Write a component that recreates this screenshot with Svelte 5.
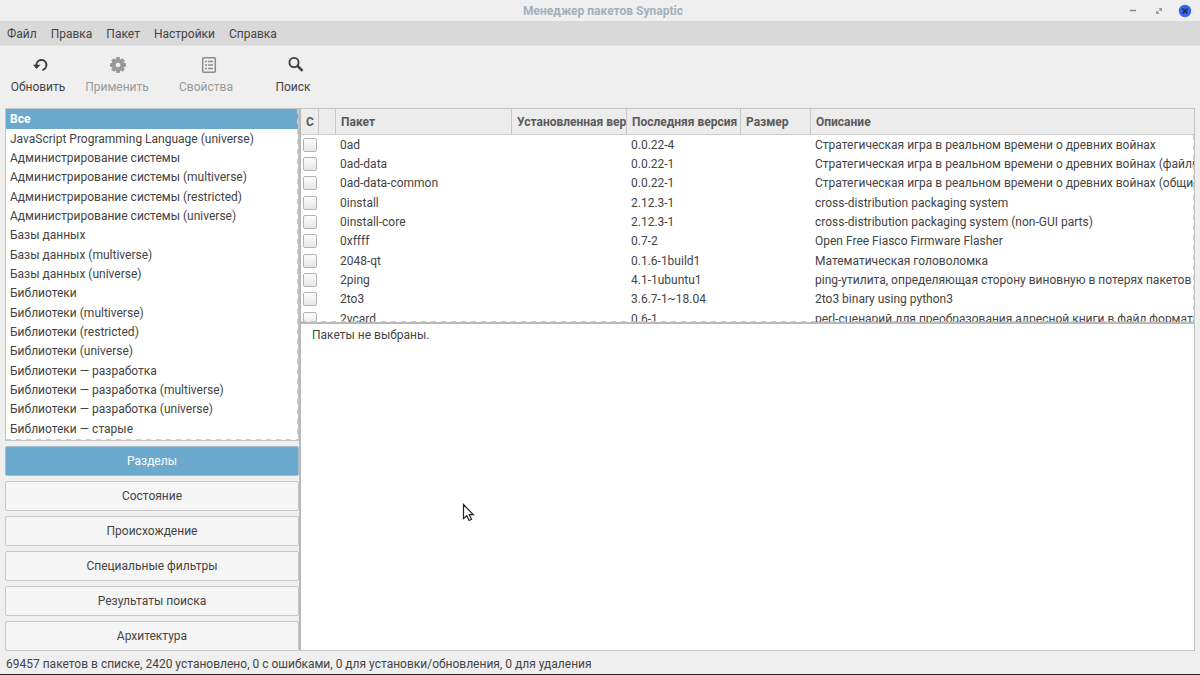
<script>
  const menu = ["Файл", "Правка", "Пакет", "Настройки", "Справка"];

  const sections = [
    "Все",
    "JavaScript Programming Language (universe)",
    "Администрирование системы",
    "Администрирование системы (multiverse)",
    "Администрирование системы (restricted)",
    "Администрирование системы (universe)",
    "Базы данных",
    "Базы данных (multiverse)",
    "Базы данных (universe)",
    "Библиотеки",
    "Библиотеки (multiverse)",
    "Библиотеки (restricted)",
    "Библиотеки (universe)",
    "Библиотеки — разработка",
    "Библиотеки — разработка (multiverse)",
    "Библиотеки — разработка (universe)",
    "Библиотеки — старые",
  ];

  const views = [
    "Разделы",
    "Состояние",
    "Происхождение",
    "Специальные фильтры",
    "Результаты поиска",
    "Архитектура",
  ];

  const packages = [
    { name: "0ad", latest: "0.0.22-4", about: "Стратегическая игра в реальном времени о древних войнах" },
    { name: "0ad-data", latest: "0.0.22-1", about: "Стратегическая игра в реальном времени о древних войнах (файлы данных)" },
    { name: "0ad-data-common", latest: "0.0.22-1", about: "Стратегическая игра в реальном времени о древних войнах (общие файлы)" },
    { name: "0install", latest: "2.12.3-1", about: "cross-distribution packaging system" },
    { name: "0install-core", latest: "2.12.3-1", about: "cross-distribution packaging system (non-GUI parts)" },
    { name: "0xffff", latest: "0.7-2", about: "Open Free Fiasco Firmware Flasher" },
    { name: "2048-qt", latest: "0.1.6-1build1", about: "Математическая головоломка" },
    { name: "2ping", latest: "4.1-1ubuntu1", about: "ping-утилита, определяющая сторону виновную в потерях пакетов" },
    { name: "2to3", latest: "3.6.7-1~18.04", about: "2to3 binary using python3" },
    { name: "2vcard", latest: "0.6-1", about: "perl-сценарий для преобразования адресной книги в файл формата VCARD" },
  ];

  let section = "Все";
  let view = "Разделы";
</script>

<style>
  :global(body) {
    margin: 0;
    background: #efefef;
  }
  .window {
    display: flex;
    flex-direction: column;
    box-sizing: border-box;
    height: 100vh;
    border-bottom: 1px solid #202020;
    background: #efefef;
    color: #444;
    font-family: Roboto, "Noto Sans", sans-serif;
    font-size: 12px;
    line-height: 18px;
    cursor: default;
  }
  button {
    font: inherit;
    color: inherit;
    margin: 0;
    padding: 0;
    border: none;
    background: none;
  }
  svg {
    display: block;
  }
  .titlebar {
    display: grid;
    grid-template-columns: 1fr auto 1fr;
    align-items: center;
    height: 21px;
    padding: 0 8px 0 14px;
  }
  h1 {
    grid-column: 2;
    margin: 0;
    font-size: 12px;
    line-height: 22px;
    color: #a3afbb;
  }
  .controls {
    display: flex;
    justify-content: flex-end;
    gap: 12px;
  }
  .menubar {
    display: flex;
    gap: 14px;
    height: 24px;
    padding: 0 7px;
    background: #d9d9d9;
    border-bottom: 1px solid #e2e2e2;
  }
  .menubar button {
    padding-top: 1px;
  }
  .toolbar {
    display: flex;
    align-items: flex-start;
    height: 54px;
    padding: 8px 0 0 4px;
  }
  .toolbar button {
    display: flex;
    flex-direction: column;
    align-items: center;
    gap: 2px;
    width: 68px;
  }
  .toolbar .apply {
    width: 90px;
  }
  .toolbar .props {
    width: 88px;
  }
  .toolbar .search {
    width: 86px;
  }
  .toolbar button:disabled {
    color: #999;
  }
  .main {
    display: flex;
    flex: 1;
    min-height: 0;
    padding: 0 5px;
  }
  .sidebar {
    display: flex;
    flex-direction: column;
    flex: none;
    gap: 5px;
    width: 294px;
  }
  .sections {
    position: relative;
    flex: 1;
    min-height: 0;
    overflow: hidden;
    margin: 0;
    padding: 0;
    list-style: none;
    background: #fff;
    border: 1px solid #c4c4c4;
  }
  .sections::after,
  .packages::after {
    content: "";
    position: absolute;
    inset: 0;
    background:
      repeating-linear-gradient(#ccc 0 5px, transparent 5px 10px) right / 1px 100% no-repeat,
      repeating-linear-gradient(90deg, #ccc 0 5px, transparent 5px 10px) bottom / 100% 1px no-repeat;
    pointer-events: none;
  }
  .sections li {
    height: 19px;
  }
  .sections li:nth-child(3n + 1) {
    height: 20px;
  }
  .sections button {
    width: 100%;
    height: 100%;
    padding: 0 4px;
    text-align: left;
    white-space: nowrap;
  }
  .sections .selected {
    background: #6ca9ce;
    color: #fff;
    font-weight: bold;
  }
  .views {
    display: flex;
    flex-direction: column;
    gap: 5px;
  }
  .views button {
    height: 30px;
    background: #f5f5f5;
    border: 1px solid #c8c8c8;
    border-radius: 2px;
  }
  .views .active {
    background: #6ca9ce;
    border-color: #a3bccb;
    color: #fff;
  }
  .content {
    display: flex;
    flex-direction: column;
    flex: 1;
    min-width: 0;
    border: 1px solid #c4c4c4;
    border-left: 2px solid #b9b9b9;
    background: #fff;
  }
  .packages {
    position: relative;
    flex: none;
    height: 213px;
    overflow: hidden;
    border-bottom: 2px solid #b9b9b9;
  }
  .packages::after {
    top: 26px;
  }
  table {
    width: 100%;
    table-layout: fixed;
    border-collapse: separate;
    border-spacing: 0;
  }
  .mark {
    width: 18px;
  }
  .badge {
    width: 17px;
  }
  .name {
    width: 176px;
  }
  .installed {
    width: 115px;
  }
  .latest {
    width: 114px;
  }
  .size {
    width: 70px;
  }
  th,
  td {
    box-sizing: border-box;
    overflow: hidden;
    padding: 0 0 0 4px;
    text-align: left;
    white-space: nowrap;
  }
  th {
    height: 26px;
    padding-left: 5px;
    background: #ececec;
    border-right: 1px solid #c8c8c8;
    border-bottom: 1px solid #ccc;
    color: #5a5a5a;
  }
  th:last-child {
    border-right: none;
  }
  td {
    height: 19px;
  }
  tr:nth-child(3n) td {
    height: 20px;
  }
  td:first-child {
    padding-left: 2px;
  }
  input {
    display: block;
    appearance: none;
    box-sizing: border-box;
    width: 14px;
    height: 14px;
    margin: 0;
    border: 1px solid #b4b4b4;
    border-radius: 2px;
    background: linear-gradient(#fdfdfd, #e6e6e6);
  }
  input:checked {
    background: #6ca9ce;
  }
  .details {
    position: relative;
    flex: 1;
    padding: 2px 11px;
  }
  .details p {
    margin: 0;
  }
  .pointer {
    position: absolute;
    left: 161px;
    top: 179px;
  }
  .status {
    height: 23px;
    padding: 0 6px;
    line-height: 26px;
  }
</style>

<div class="window">
  <header class="titlebar">
    <h1>Менеджер пакетов Synaptic</h1>
    <div class="controls">
      <button aria-label="Свернуть">
        <svg width="14" height="14"><path d="M4 6.5h6" stroke="#8a8a8a" stroke-width="1.6" /></svg>
      </button>
      <button aria-label="Развернуть">
        <svg width="14" height="14" fill="#9a9a9a">
          <path d="M6.5 4H10v3.5L8.9 6.4 7.8 6.9 7.2 6.2 7.7 5.2ZM4 6.5l1.1 1.1 1.1-.5.6.7-.5 1L7.5 10H4Z" />
        </svg>
      </button>
      <button aria-label="Закрыть">
        <svg width="14" height="14">
          <circle cx="7" cy="7" r="6.2" fill="#3465ee" />
          <path d="M4.7 4.7l4.6 4.6M9.3 4.7L4.7 9.3" stroke="#25304f" stroke-width="1.7" />
        </svg>
      </button>
    </div>
  </header>

  <nav class="menubar">
    {#each menu as item}
      <button>{item}</button>
    {/each}
  </nav>

  <div class="toolbar">
    <button>
      <svg width="22" height="22" fill="none">
        <path d="M9.4 11.5V11a5 5 0 1 1 6 4.9" stroke="#3c3c3c" stroke-width="2" />
        <path d="M6 10.8h7.5L9.5 15Z" fill="#3c3c3c" />
      </svg>
      Обновить
    </button>
    <button class="apply" disabled>
      <svg width="22" height="22">
        <g fill="#999">
          <rect x="10" y="3" width="4" height="16" rx="1" />
          <rect x="10" y="3" width="4" height="16" rx="1" transform="rotate(45 12 11)" />
          <rect x="10" y="3" width="4" height="16" rx="1" transform="rotate(90 12 11)" />
          <rect x="10" y="3" width="4" height="16" rx="1" transform="rotate(135 12 11)" />
          <circle cx="12" cy="11" r="6.2" />
        </g>
        <circle cx="12" cy="11" r="2.3" fill="#efefef" />
      </svg>
      Применить
    </button>
    <button class="props" disabled>
      <svg width="22" height="22" fill="none" stroke="#8c8c8c">
        <rect x="7.7" y="3.7" width="12.6" height="14.6" rx="1" stroke-width="1.5" />
        <path d="M10 7.5h2M10 11h2M10 14.5h2M13 7.5h5M13 11h5M13 14.5h5" stroke-width="1.5" />
      </svg>
      Свойства
    </button>
    <button class="search">
      <svg width="22" height="22" fill="none" stroke="#3c3c3c">
        <circle cx="12" cy="8.5" r="4.6" stroke-width="1.8" />
        <path d="M15.3 11.7l5.2 5.2" stroke-width="2.4" />
      </svg>
      Поиск
    </button>
  </div>

  <main class="main">
    <aside class="sidebar">
      <ul class="sections">
        {#each sections as item}
          <li>
            <button class:selected={item === section} on:click={() => (section = item)}>{item}</button>
          </li>
        {/each}
      </ul>
      <div class="views">
        {#each views as item}
          <button class:active={item === view} on:click={() => (view = item)}>{item}</button>
        {/each}
      </div>
    </aside>

    <section class="content">
      <div class="packages">
        <table>
          <thead>
            <tr>
              <th class="mark">С</th>
              <th class="badge"></th>
              <th class="name">Пакет</th>
              <th class="installed">Установленная версия</th>
              <th class="latest">Последняя версия</th>
              <th class="size">Размер</th>
              <th>Описание</th>
            </tr>
          </thead>
          <tbody>
            {#each packages as pkg}
              <tr>
                <td><input type="checkbox" aria-label={pkg.name} /></td>
                <td></td>
                <td>{pkg.name}</td>
                <td></td>
                <td>{pkg.latest}</td>
                <td></td>
                <td>{pkg.about}</td>
              </tr>
            {/each}
          </tbody>
        </table>
      </div>
      <div class="details">
        <p>Пакеты не выбраны.</p>
        <svg class="pointer" width="13" height="20">
          <path d="M1.5 1.5v14l3.3-2.8 2.3 4.8 2.4-1.2-2.2-4.6h4Z" fill="#fff" stroke="#222" stroke-width="1.2" />
        </svg>
      </div>
    </section>
  </main>

  <footer class="status">
    69457 пакетов в списке, 2420 установлено, 0 с ошибками, 0 для установки/обновления, 0 для удаления
  </footer>
</div>
